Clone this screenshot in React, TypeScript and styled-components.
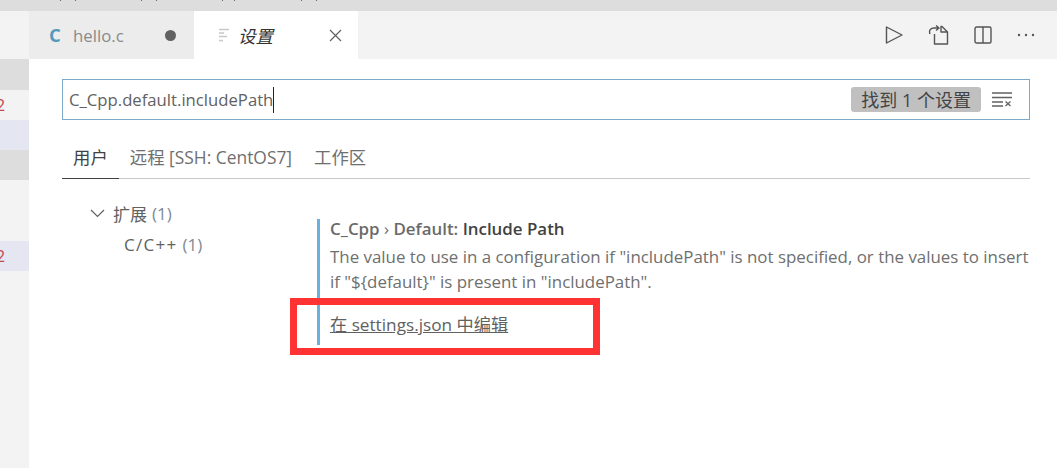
import React from "react";
import styled, { createGlobalStyle } from "styled-components";

const Global = createGlobalStyle`
  html, body { margin: 0; padding: 0; background: #fff; }
  body { font-family: "Open Sans", "Noto Sans CJK SC", sans-serif; overflow: hidden; }
`;

const Window = styled.div`
  width: 1057px; height: 468px; display: flex; flex-direction: column; overflow: hidden;
`;
const TitleBar = styled.div`
  height: 11px; flex: none; background: #dddddd;
`;
const TitleTicks = styled.svg`
  display: block;
`;
const Body = styled.div`
  flex: 1; display: flex; min-height: 0;
`;
const Explorer = styled.div`
  width: 29px; flex: none; background: #f3f3f3; display: flex; flex-direction: column;
`;
const ExplorerRow = styled.div<{ $bg?: string; $h: number }>`
  height: ${p => p.$h}px; flex: none; background: ${p => p.$bg || "transparent"};
  color: #c5484f; font-size: 16px; line-height: ${p => p.$h}px; overflow: hidden;
  text-indent: -4px;
`;
const Main = styled.div`
  flex: 1; display: flex; flex-direction: column; min-width: 0;
`;
const TabBar = styled.div`
  height: 48px; flex: none; background: #f3f3f3; display: flex; align-items: stretch;
`;
const Tab = styled.div<{ $active?: boolean }>`
  width: ${p => p.$active ? 164 : 165}px; flex: none; display: flex; align-items: center; box-sizing: border-box;
  background: ${p => p.$active ? "#fff" : "#ececec"};
  padding-left: ${p => p.$active ? 24 : 20}px;
`;
const CIcon = styled.span`
  font-size: 18.5px; font-weight: 700; color: #519aba; width: 24px; line-height: 1;
`;
const TabLabel = styled.span<{ $italic?: boolean }>`
  font-size: ${p => p.$italic ? 17.5 : 16.8}px; color: ${p => p.$italic ? "#333" : "#8a8a8a"};
  font-style: ${p => p.$italic ? "italic" : "normal"};
  margin-left: ${p => p.$italic ? "9px" : "0"};
  flex: 1;
`;
const Dot = styled.span`
  width: 11px; height: 11px; border-radius: 50%; background: #616161; margin-right: 18px; flex: none;
`;
const TabClose = styled.svg`
  margin-right: 16px; flex: none;
`;
const Actions = styled.div`
  margin-left: auto; display: flex; align-items: center; gap: 25px; padding-right: 22px;
`;
const Page = styled.div`
  flex: 1; padding: 20px 27px 0 33px; display: flex; flex-direction: column; min-height: 0;
`;
const SearchBox = styled.div`
  height: 41px; box-sizing: border-box; border: 1px solid #7fa9c9; display: flex; align-items: center;
  padding: 0 17px 0 6px;
`;
const Query = styled.span`
  font-size: 16.7px; color: #616161; flex: 1; display: flex; align-items: center;
`;
const Caret = styled.span`
  display: inline-block; width: 1px; height: 26px; background: #222;
`;
const Count = styled.span`
  background: #c0c0c0; color: #444; font-size: 18px; height: 25px; line-height: 26px; border-radius: 3px;
  padding: 0 10px; margin-right: 11px; white-space: nowrap;
`;
const Tabs = styled.div`
  margin-top: 16px; height: 43px; box-sizing: border-box; border-bottom: 1px solid #c8c8c8; display: flex;
`;
const SettingTab = styled.div<{ $active?: boolean }>`
  font-size: 17.4px; color: ${p => p.$active ? "#424242" : "#6f6f6f"}; line-height: 42px;
  padding: 0 11px; height: 43px; box-sizing: border-box;
  border-bottom: ${p => p.$active ? "1px solid #424242" : "0"};
`;
const Content = styled.div`
  flex: 1; display: flex; min-height: 0;
`;
const Toc = styled.div`
  width: 255px; flex: none; padding-top: 19px; box-sizing: border-box;
`;
const TocRow = styled.div<{ $indent: number }>`
  display: flex; align-items: center; height: 31px; padding-left: ${p => p.$indent}px;
  font-size: 17px; color: #616161;
`;
const Chevron = styled.svg`
  margin-right: 8px; flex: none;
`;
const Spaced = styled.span`
  letter-spacing: 1.3px;
`;
const Muted = styled.span`
  color: #7f8a95; margin-left: 5px;
`;
const Setting = styled.div`
  margin-top: 40px; height: 126px; border-left: 3px solid #6cb0e0; box-sizing: border-box;
  padding-left: 10px; flex: 1; align-self: flex-start;
`;
const SettingTitle = styled.div`
  font-size: 16.9px; line-height: 20px; color: #6a6a6a; font-weight: 600; white-space: nowrap;
`;
const Sep = styled.span`
  font-weight: 400;
`;
const Strong = styled.span`
  color: #424242; font-weight: 600;
`;
const Desc = styled.div`
  font-size: 16.9px; line-height: 25px; color: #6f6f6f; margin-top: 5px; white-space: nowrap;
`;
const EditLink = styled.a`
  display: block; font-size: 17.2px; line-height: 22px; color: #616161; text-decoration: underline; margin-top: 20px;
`;
const Highlight = styled.div`
  position: absolute; left: 290px; top: 298px; width: 310px; height: 57px; box-sizing: border-box;
  border: 7px solid #ff3333; pointer-events: none;
`;

const tickXs = [60, 75, 141, 156, 222, 234, 301, 316];

export default function App() {
  return (
    <Window>
      <Global />
      <TitleBar>
        <TitleTicks width="1057" height="2" viewBox="0 0 1057 2" fill="#666">
          {tickXs.map(x => <rect key={x} x={x} y="0" width="1" height="1" />)}
        </TitleTicks>
      </TitleBar>
      <Body>
        <Explorer>
          <ExplorerRow $h={48} />
          <ExplorerRow $h={31} $bg="#dddddd" />
          <ExplorerRow $h={30}>2</ExplorerRow>
          <ExplorerRow $h={30} $bg="#e4e6f1" />
          <ExplorerRow $h={30} $bg="#dddddd" />
          <ExplorerRow $h={61} />
          <ExplorerRow $h={30} $bg="#e4e6f1">2</ExplorerRow>
        </Explorer>
        <Main>
          <TabBar>
            <Tab>
              <CIcon>C</CIcon>
              <TabLabel>hello.c</TabLabel>
              <Dot />
            </Tab>
            <Tab $active>
              <svg width="11" height="14" viewBox="0 0 11 14" fill="none" stroke="#c8c8c8" strokeWidth="1.6">
                <path d="M1 1.5h10M1 5h5M1 8.5h8M1 12.5h4" />
              </svg>
              <TabLabel $italic>设置</TabLabel>
              <TabClose width="13" height="13" viewBox="0 0 13 13" fill="none" stroke="#616161" strokeWidth="1.2">
                <path d="M1 1l11 11M12 1L1 12" />
              </TabClose>
            </Tab>
            <Actions>
              <svg width="20" height="20" viewBox="0 0 20 20" fill="none" stroke="#555" strokeWidth="1.4" strokeLinejoin="round">
                <path d="M3.5 2v16l15.5-8z" />
              </svg>
              <svg width="21" height="21" viewBox="0 0 21 21" fill="none" stroke="#555" strokeWidth="1.4" strokeLinejoin="round">
                <path d="M6.5 9v10h13V7l-5.5-5.5H13v5.5h6.5M2 9C0.5 5 3 3 6 3h5M8 0.5L11 3 8 5.5" />
              </svg>
              <svg width="18" height="18" viewBox="0 0 18 18" fill="none" stroke="#555" strokeWidth="1.4">
                <rect x="1" y="1" width="16" height="16" rx="1.5" />
                <path d="M9 1v16" />
              </svg>
              <svg width="18" height="4" viewBox="0 0 18 4" fill="#555">
                <circle cx="2" cy="2" r="1.2" /><circle cx="9" cy="2" r="1.2" /><circle cx="16" cy="2" r="1.2" />
              </svg>
            </Actions>
          </TabBar>
          <Page>
            <SearchBox>
              <Query>C_Cpp.default.includePath<Caret /></Query>
              <Count>找到 1 个设置</Count>
              <svg width="20" height="15" viewBox="0 0 20 15" fill="none" stroke="#616161" strokeWidth="1.3">
                <path d="M0 1h20M0 5.5h20M0 10h11M0 14h11M13.5 9.5l5 4.5M18.5 9.5l-5 4.5" />
              </svg>
            </SearchBox>
            <Tabs>
              <SettingTab $active>用户</SettingTab>
              <SettingTab>远程 [SSH: CentOS7]</SettingTab>
              <SettingTab>工作区</SettingTab>
            </Tabs>
            <Content>
              <Toc>
                <TocRow $indent={28}>
                  <Chevron width="15" height="9" viewBox="0 0 15 9" fill="none" stroke="#616161" strokeWidth="1.2">
                    <path d="M1 1l6.5 6.5L14 1" />
                  </Chevron>
                  扩展<Muted>(1)</Muted>
                </TocRow>
                <TocRow $indent={62}><Spaced>C/C++</Spaced><Muted>(1)</Muted></TocRow>
              </Toc>
              <Setting>
                <SettingTitle>C_Cpp <Sep>›</Sep> Default: <Strong>Include Path</Strong></SettingTitle>
                <Desc>
                  The value to use in a configuration if "includePath" is not specified, or the values to insert<br />
                  if "{"${default}"}" is present in "includePath".
                </Desc>
                <EditLink>在 settings.json 中编辑</EditLink>
              </Setting>
            </Content>
          </Page>
        </Main>
      </Body>
      <Highlight />
    </Window>
  );
}
